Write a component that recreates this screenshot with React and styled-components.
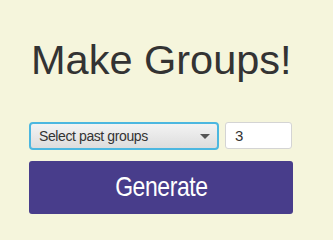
import React from "react";
import styled, { createGlobalStyle } from "styled-components";

const Global = createGlobalStyle`
  html, body { margin: 0; padding: 0; background: #f5f5dc; }
  body { font-family: "Liberation Sans", Arial, sans-serif; color: #333; }
`;

const Page = styled.div`
  width: 264px;
  padding: 36px 40px 0 29px;
`;

const Title = styled.h1`
  margin: 0 0 38px 2px;
  font-size: 41.5px;
  line-height: 48px;
  font-weight: normal;
  color: #333;
  white-space: nowrap;
`;

const Row = styled.div`
  display: flex;
  gap: 6px;
  height: 28px;
  margin-bottom: 11px;
`;

const SelectBox = styled.div`
  position: relative;
  width: 190px;
  flex: none;
`;

const Select = styled.select`
  appearance: none;
  -webkit-appearance: none;
  box-sizing: border-box;
  width: 100%;
  height: 28px;
  margin: 0;
  padding: 0 24px 0 8px;
  border: 2px solid #4cb7e0;
  border-radius: 4px;
  background: linear-gradient(#f3f3f3, #dddddd);
  font-family: "Liberation Sans", Arial, sans-serif;
  font-size: 14px;
  letter-spacing: -0.4px;
  color: #333;
  outline: none;
`;

const Arrow = styled.svg`
  position: absolute;
  right: 9px;
  top: 12px;
  pointer-events: none;
`;

const NumberInput = styled.input`
  box-sizing: border-box;
  width: 67px;
  height: 27px;
  margin: 0;
  padding: 0 9px;
  border: 1px solid #d4d4d4;
  border-radius: 3px;
  background: #fff;
  font-family: "Liberation Sans", Arial, sans-serif;
  font-size: 15px;
  color: #333;
  outline: none;
`;

const Button = styled.button`
  display: flex;
  align-items: center;
  justify-content: center;
  box-sizing: border-box;
  width: 264px;
  height: 53px;
  margin: 0;
  padding: 0 0 1px;
  border: none;
  border-radius: 3px;
  background: #483d8b;
  color: #fff;
  font-family: "Liberation Sans", Arial, sans-serif;
  font-size: 28px;
  cursor: pointer;
`;

const Label = styled.span`
  display: inline-block;
  letter-spacing: -0.5px;
  transform: scaleX(0.82);
`;

export default function App() {
  return (
    <>
      <Global />
      <Page>
        <Title>Make Groups!</Title>
        <Row>
          <SelectBox>
            <Select defaultValue="">
              <option value="">Select past groups</option>
            </Select>
            <Arrow width="10" height="5" viewBox="0 0 10 5">
              <path d="M0 0h10L5 5z" fill="#555" />
            </Arrow>
          </SelectBox>
          <NumberInput type="text" defaultValue="3" />
        </Row>
        <Button>
          <Label>Generate</Label>
        </Button>
      </Page>
    </>
  );
}
